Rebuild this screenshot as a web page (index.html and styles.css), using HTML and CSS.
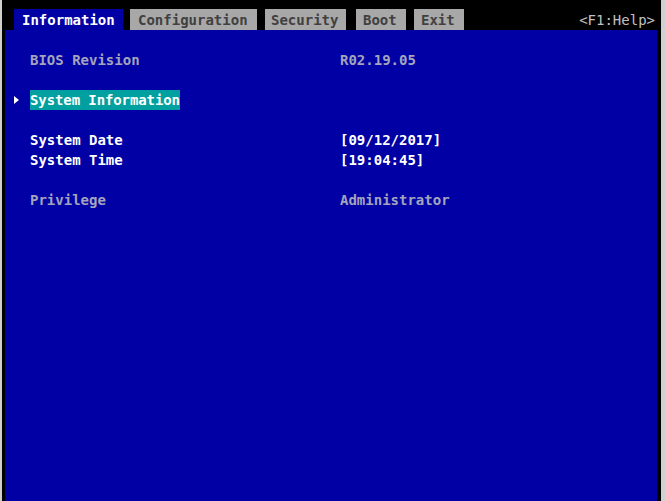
FILE: index.html
```html
<!DOCTYPE html>
<html>
<head>
<meta charset="utf-8">
<link rel="stylesheet" href="styles.css">
</head>
<body>
<div class="screen">
  <div class="topbar">
    <div class="tabs">
      <div class="tab tab-active tab-info">Information</div>
      <div class="tab tab-config">Configuration</div>
      <div class="tab tab-security">Security</div>
      <div class="tab tab-boot">Boot</div>
      <div class="tab tab-exit">Exit</div>
    </div>
    <div class="help">&lt;F1:Help&gt;</div>
  </div>
  <div class="panel">
    <div class="row dim"><span class="label">BIOS Revision</span><span class="value">R02.19.05</span></div>
    <div class="row blank"></div>
    <div class="row"><span class="arrow"></span><span class="label"><span class="hl">System Information</span></span></div>
    <div class="row blank"></div>
    <div class="row"><span class="label">System Date</span><span class="value">[09/12/2017]</span></div>
    <div class="row"><span class="label">System Time</span><span class="value">[19:04:45]</span></div>
    <div class="row blank"></div>
    <div class="row dim"><span class="label">Privilege</span><span class="value">Administrator</span></div>
  </div>
</div>
</body>
</html>
```
FILE: styles.css
```css
html, body {
  margin: 0;
  padding: 0;
  background: #d0d0d0;
  height: 501px;
  overflow: hidden;
}
.screen {
  margin-left: 2px;
  width: 659px;
  height: 501px;
  background: #000;
  box-sizing: border-box;
  padding: 0 4px 0 3px;
  display: flex;
  flex-direction: column;
  font-family: "DejaVu Sans Mono", "Liberation Mono", monospace;
  font-weight: bold;
  font-size: 14px;
}
.topbar {
  height: 30px;
  display: flex;
  align-items: flex-end;
  justify-content: space-between;
}
.tabs {
  display: flex;
  padding-left: 9px;
}
.tab {
  height: 21px;
  line-height: 22px;
  background: #a8a8a8;
  color: #404040;
  box-sizing: border-box;
  padding-left: 8px;
  margin-right: 8px;
  white-space: nowrap;
}
.tab-active {
  background: #0000a4;
  color: #fff;
}
.tab-info { width: 109px; margin-right: 7px; }
.tab-config { width: 127px; margin-right: 8px; }
.tab-security { width: 81px; margin-right: 10px; padding-left: 6px; }
.tab-boot { width: 50px; margin-right: 8px; padding-left: 7px; }
.tab-exit { width: 50px; padding-left: 7px; }
.help {
  color: #c0c0c0;
  font-weight: normal;
  height: 21px;
  line-height: 22px;
  padding-right: 2px;
}
.panel {
  flex: 1;
  background: #0000a4;
  padding-top: 20px;
}
.row {
  height: 20px;
  line-height: 20px;
  display: flex;
  position: relative;
  color: #fff;
}
.label {
  margin-left: 25px;
  width: 310px;
  white-space: nowrap;
}
.dim {
  color: #a4a4bc;
}
.value {
  white-space: nowrap;
}
.hl {
  background: #00a0a0;
  display: inline-block;
  height: 20px;
  letter-spacing: -0.1px;
}
.arrow {
  position: absolute;
  left: 9px;
  top: 6px;
  width: 0;
  height: 0;
  border-top: 4px solid transparent;
  border-bottom: 4px solid transparent;
  border-left: 5px solid #fff;
}
```
